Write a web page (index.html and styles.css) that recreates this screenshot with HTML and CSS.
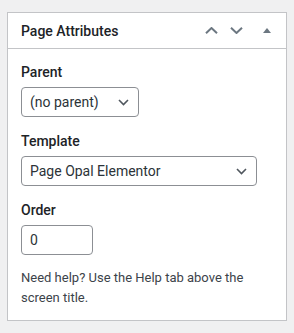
FILE: index.html
```html
<!DOCTYPE html>
<html lang="en">

<head>
    <meta charset="UTF-8" />
    <meta name="viewport" content="width=device-width, initial-scale=1.0" />
    <title>Page Attributes</title>
    <link rel="stylesheet" href="styles.css">
</head>

<body>
    <div class="postbox">
        <div class="postbox-header">
            <h2 class="hndle">Page Attributes</h2>
            <div class="handle-actions">
                <button class="handle-btn btn-up" aria-label="Move up">
                    <svg width="13" height="7" viewBox="0 0 13 7"><path d="M1 6.2 L6.5 1 L12 6.2" /></svg>
                </button>
                <button class="handle-btn btn-down" aria-label="Move down">
                    <svg width="13" height="7" viewBox="0 0 13 7"><path d="M1 0.8 L6.5 6 L12 0.8" /></svg>
                </button>
                <button class="handle-btn btn-toggle" aria-label="Toggle panel">
                    <svg width="8" height="5" viewBox="0 0 8 5"><polygon points="0,5 4,0 8,5" /></svg>
                </button>
            </div>
        </div>

        <div class="inside">
            <p class="field-label">Parent</p>
            <div class="select select-parent">
                <span>(no parent)</span>
                <svg width="11" height="7" viewBox="0 0 11 7"><path d="M1 1 L5.5 5.5 L10 1" /></svg>
            </div>

            <p class="field-label">Template</p>
            <div class="select select-template">
                <span>Page Opal Elementor</span>
                <svg width="11" height="7" viewBox="0 0 11 7"><path d="M1 1 L5.5 5.5 L10 1" /></svg>
            </div>

            <p class="field-label">Order</p>
            <div class="text-input">0</div>

            <p class="help">Need help? Use the Help tab above the screen title.</p>
        </div>
    </div>
</body>

</html>
```

FILE: styles.css
```css
* {
    box-sizing: border-box;
}

body {
    margin: 12px 7px;
    background-color: #f0f0f1;
    font-family: 'Roboto', 'Noto Sans', sans-serif;
    color: #1d2327;
}

.postbox {
    width: 280px;
    background: #ffffff;
    border: 1px solid #c3c4c7;
}

.postbox-header {
    display: flex;
    align-items: center;
    justify-content: space-between;
    height: 36px;
    border-bottom: 1px solid #c3c4c7;
}

.hndle {
    margin: 0;
    padding: 0 13px;
    font-size: 14px;
    font-weight: 500;
    line-height: 20px;
}

.handle-actions {
    display: flex;
    align-items: center;
    margin-right: 1px;
}

.handle-btn {
    display: flex;
    align-items: center;
    justify-content: center;
    height: 35px;
    padding: 0;
    border: none;
    background: none;
}

.btn-up,
.btn-down {
    width: 25px;
}

.btn-toggle {
    width: 36px;
}

.handle-btn path {
    fill: none;
    stroke: #6c7781;
    stroke-width: 2;
}

.handle-btn polygon {
    fill: #6c7781;
}

.inside {
    padding: 0 13px 12px;
}

.field-label {
    margin: 14px 0 5px;
    font-size: 14px;
    font-weight: 500;
    line-height: 20px;
}

.field-label:first-child {
    margin-top: 13px;
}

.select,
.text-input {
    display: flex;
    align-items: center;
    height: 30px;
    padding: 0 8px;
    border: 1px solid #8c8f94;
    border-radius: 4px;
    font-size: 14px;
    color: #2c3338;
}

.select {
    justify-content: space-between;
    padding-right: 9px;
}

.select path {
    fill: none;
    stroke: #50575e;
    stroke-width: 1.6;
}

.select-parent {
    width: 118px;
}

.select-template {
    width: 236px;
}

.text-input {
    width: 72px;
}

.help {
    margin: 13px 0 0;
    font-size: 13px;
    line-height: 20px;
    color: #3c434a;
}
```
